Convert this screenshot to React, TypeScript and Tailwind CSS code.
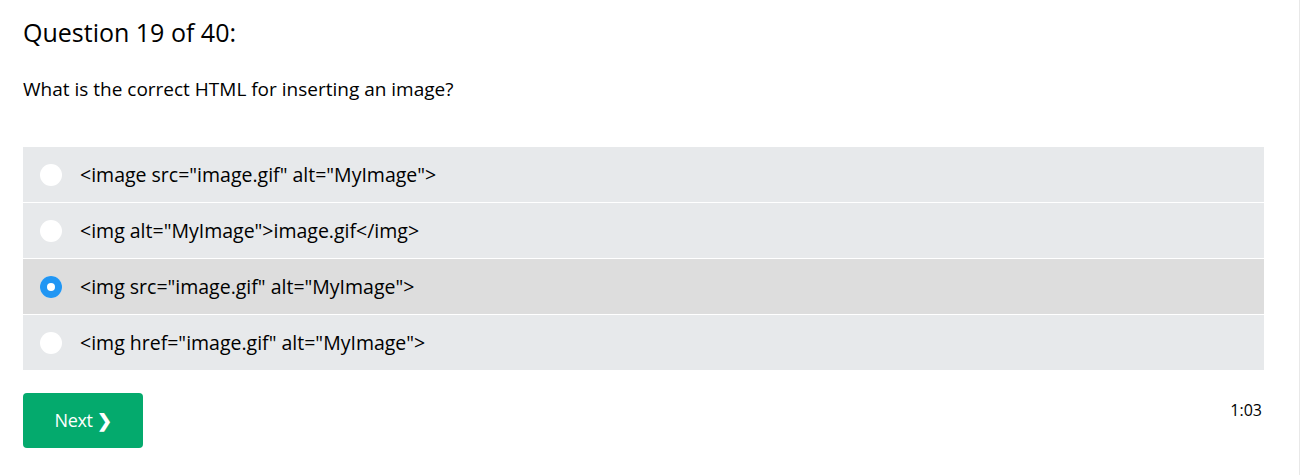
import { useState } from "react";

const options = [
  '<image src="image.gif" alt="MyImage">',
  '<img alt="MyImage">image.gif</img>',
  '<img src="image.gif" alt="MyImage">',
  '<img href="image.gif" alt="MyImage">',
];

export default function App() {
  const [selected, setSelected] = useState(2);

  return (
    <div
      className="w-[1300px] h-[475px] border-r border-[#e8e8e8] bg-white text-black pl-[23px] pr-[35px]"
      style={{ fontFamily: '"Open Sans", "Noto Sans", sans-serif' }}
    >
      <h3 className="pt-[14px] text-[25px] leading-[36px] font-normal">Question 19 of 40:</h3>

      <p className="mt-[26px] text-[19px] leading-[26px]">What is the correct HTML for inserting an image?</p>

      <div className="mt-[45px] flex flex-col gap-px">
        {options.map((opt, i) => (
          <label
            key={i}
            onClick={() => setSelected(i)}
            className={`flex h-[55px] cursor-pointer items-center ${selected === i ? "bg-[#dddddd]" : "bg-[#e7e9eb]"}`}
          >
            <span className="ml-[17px] flex h-[22px] w-[22px] items-center justify-center rounded-full bg-white">
              {selected === i && (
                <span className="flex h-[22px] w-[22px] items-center justify-center rounded-full bg-[#2196f3]">
                  <span className="h-[8px] w-[8px] rounded-full bg-white" />
                </span>
              )}
            </span>
            <span className="ml-[18px] text-[19.5px]">{opt}</span>
          </label>
        ))}
      </div>

      <div className="mt-[23px] flex items-start justify-between">
        <button className="h-[55px] w-[120px] rounded-[4px] bg-[#04aa6d] text-[18px] tracking-[-0.4px] text-white">
          Next <span className="font-bold">&#10095;</span>
        </button>
        <span className="mt-[5px] mr-[2px] text-[16px]">1:03</span>
      </div>
    </div>
  );
}
